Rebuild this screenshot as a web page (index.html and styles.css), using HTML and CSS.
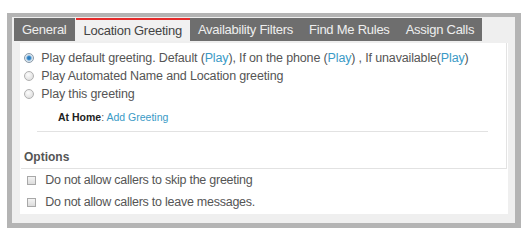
FILE: index.html
```html
<!DOCTYPE html>
<html>
<head>
<meta charset="utf-8">
<link rel="stylesheet" href="styles.css">
</head>
<body>
<div class="frame">
  <div class="tabs">
    <div class="tab">General</div>
    <div class="tab active">Location Greeting</div>
    <div class="tab">Availability Filters</div>
    <div class="tab">Find Me Rules</div>
    <div class="tab">Assign Calls</div>
  </div>
  <div class="panel">
    <div class="top">
      <label class="opt"><input type="radio" name="g" class="radio" checked> Play default greeting. Default (<a class="link">Play</a>), If on the phone (<a class="link">Play</a>) , If unavailable(<a class="link">Play</a>)</label>
      <label class="opt"><input type="radio" name="g" class="radio"> Play Automated Name and Location greeting</label>
      <label class="opt"><input type="radio" name="g" class="radio"> Play this greeting</label>
      <div class="home"><b>At Home</b>: <a class="link">Add Greeting</a></div>
      <div class="rule"></div>
      <div class="options-head">Options</div>
    </div>
    <label class="check"><input type="checkbox" class="box"> Do not allow callers to skip the greeting</label>
    <label class="check"><input type="checkbox" class="box"> Do not allow callers to leave messages.</label>
  </div>
</div>
</body>
</html>
```
FILE: styles.css
```css
html, body {
  margin: 0;
  padding: 0;
  background: #fff;
}
body {
  font-family: "Liberation Sans", Arial, sans-serif;
  font-size: 12.5px;
  color: #555;
}
.frame {
  margin: 13px 0 0 7px;
  width: 503px;
  height: 206px;
  border-style: solid;
  border-color: #b4b4b4;
  border-width: 4px 6px 5px 5px;
  background: #efefef;
  display: flex;
  flex-direction: column;
}
.tabs {
  display: flex;
  margin: 1px 0 0 2px;
  height: 23px;
  font-size: 13px;
}
.tab {
  background: #6e6e6e;
  color: #eee;
  padding: 0 8px;
  line-height: 23px;
  white-space: nowrap;
  letter-spacing: -0.25px;
}
.tab.active {
  background: #f1f1f1;
  color: #444;
  border-top: 2px solid #e52b2b;
  line-height: 21px;
  margin-left: 1px;
}
.panel {
  margin: 2px 7px 9px 8px;
  background: #fff;
  flex: 1;
  display: flex;
  flex-direction: column;
}
.top {
  border-right: 1px solid #e3e3e3;
  margin-right: 1px;
  padding-top: 6px;
}
.opt {
  display: flex;
  align-items: center;
  height: 18px;
  padding-left: 4px;
  white-space: pre;
  letter-spacing: -0.15px;
}
.link {
  color: #3a9ac6;
}
.radio {
  appearance: none;
  -webkit-appearance: none;
  width: 10px;
  height: 10px;
  margin: 0 4px 0 0;
  border-radius: 50%;
  border: 1px solid #b0b0b0;
  background: radial-gradient(circle at 40% 35%, #fdfdfd 0, #e2e2e2 70%);
  box-sizing: border-box;
}
.radio:checked {
  border-color: #8a9aa8;
  background: radial-gradient(circle at 50% 50%, #1f6fb0 0, #3b8ccc 30%, #d8e4ee 55%, #eef2f5 100%);
}
.home {
  margin: 5px 0 0 38px;
  height: 18px;
  line-height: 18px;
  font-size: 10.5px;
}
.home b {
  color: #222;
}
.rule {
  height: 1px;
  background: #e2e2e2;
  margin: 5px 18px 0 17px;
}
.options-head {
  margin-top: 18px;
  padding: 0 0 3px 3px;
  font-weight: bold;
  font-size: 12px;
  color: #555;
  line-height: 15px;
  border-bottom: 1px solid #e2e2e2;
  margin-left: 1px;
}
.check {
  display: flex;
  align-items: center;
  height: 22px;
  padding-left: 7px;
  white-space: pre;
  letter-spacing: -0.25px;
}
.box {
  appearance: none;
  -webkit-appearance: none;
  width: 9px;
  height: 9px;
  margin: 0 6px 0 0;
  border: 1px solid #a8a8a8;
  background: linear-gradient(#f4f4f4, #dcdcdc);
  box-sizing: border-box;
}
```
